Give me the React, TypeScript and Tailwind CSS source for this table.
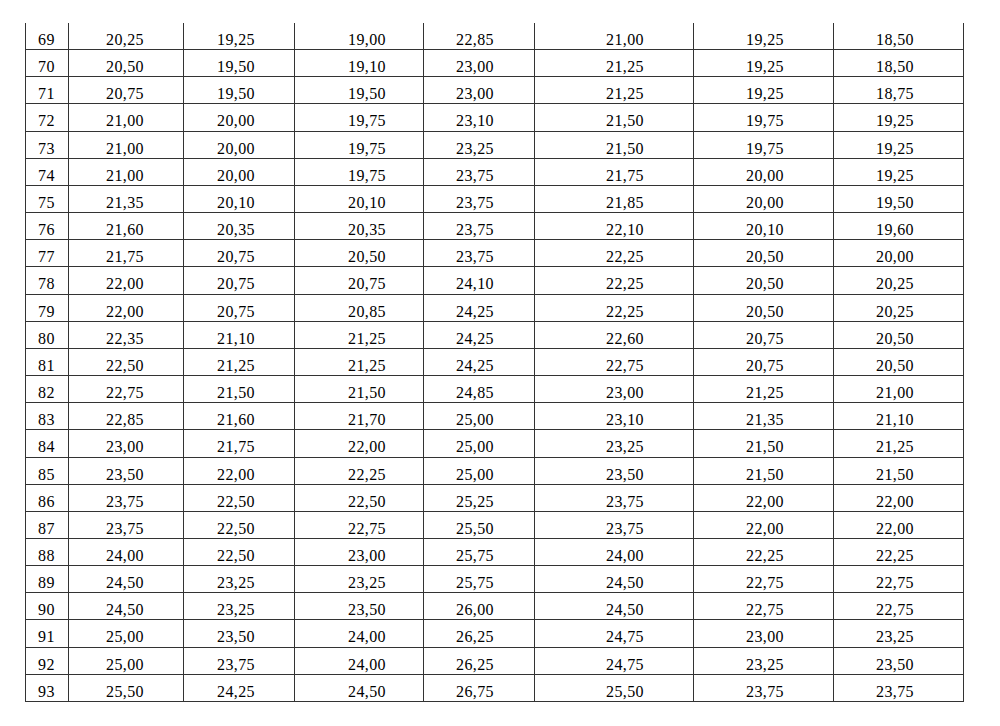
const rows: string[][] = [
	["69", "20,25", "19,25", "19,00", "22,85", "21,00", "19,25", "18,50"],
	["70", "20,50", "19,50", "19,10", "23,00", "21,25", "19,25", "18,50"],
	["71", "20,75", "19,50", "19,50", "23,00", "21,25", "19,25", "18,75"],
	["72", "21,00", "20,00", "19,75", "23,10", "21,50", "19,75", "19,25"],
	["73", "21,00", "20,00", "19,75", "23,25", "21,50", "19,75", "19,25"],
	["74", "21,00", "20,00", "19,75", "23,75", "21,75", "20,00", "19,25"],
	["75", "21,35", "20,10", "20,10", "23,75", "21,85", "20,00", "19,50"],
	["76", "21,60", "20,35", "20,35", "23,75", "22,10", "20,10", "19,60"],
	["77", "21,75", "20,75", "20,50", "23,75", "22,25", "20,50", "20,00"],
	["78", "22,00", "20,75", "20,75", "24,10", "22,25", "20,50", "20,25"],
	["79", "22,00", "20,75", "20,85", "24,25", "22,25", "20,50", "20,25"],
	["80", "22,35", "21,10", "21,25", "24,25", "22,60", "20,75", "20,50"],
	["81", "22,50", "21,25", "21,25", "24,25", "22,75", "20,75", "20,50"],
	["82", "22,75", "21,50", "21,50", "24,85", "23,00", "21,25", "21,00"],
	["83", "22,85", "21,60", "21,70", "25,00", "23,10", "21,35", "21,10"],
	["84", "23,00", "21,75", "22,00", "25,00", "23,25", "21,50", "21,25"],
	["85", "23,50", "22,00", "22,25", "25,00", "23,50", "21,50", "21,50"],
	["86", "23,75", "22,50", "22,50", "25,25", "23,75", "22,00", "22,00"],
	["87", "23,75", "22,50", "22,75", "25,50", "23,75", "22,00", "22,00"],
	["88", "24,00", "22,50", "23,00", "25,75", "24,00", "22,25", "22,25"],
	["89", "24,50", "23,25", "23,25", "25,75", "24,50", "22,75", "22,75"],
	["90", "24,50", "23,25", "23,50", "26,00", "24,50", "22,75", "22,75"],
	["91", "25,00", "23,50", "24,00", "26,25", "24,75", "23,00", "23,25"],
	["92", "25,00", "23,75", "24,00", "26,25", "24,75", "23,25", "23,50"],
	["93", "25,50", "24,25", "24,50", "26,75", "25,50", "23,75", "23,75"],
];

// column widths (incl. right border) and text indent, measured off the scan
const cols = [
	"w-[44px] pl-[12px] border-l",
	"w-[115px] pl-[37px]",
	"w-[111px] pl-[33px]",
	"w-[129px] pl-[53px]",
	"w-[111px] pl-[32px]",
	"w-[159px] pl-[71px]",
	"w-[140px] pl-[52px]",
	"w-[130px] pl-[42px]",
];

export default function App() {
	return (
		<div className="min-h-[726px] w-[1000px] bg-white pt-[23px] pl-[25px] font-[family-name:Liberation_Serif,serif] text-[16px] tracking-[0.4px] text-black">
			<div className="flex w-[939px] flex-col">
				{rows.map((row) => (
					<div key={row[0]} className="flex h-[27.16px] border-b border-[#333]">
						{row.map((cell, i) => (
							<div key={i} className={`${cols[i]} shrink-0 border-r border-[#333] pt-[9px] leading-4 whitespace-nowrap`}>
								{cell}
							</div>
						))}
					</div>
				))}
			</div>
		</div>
	);
}
